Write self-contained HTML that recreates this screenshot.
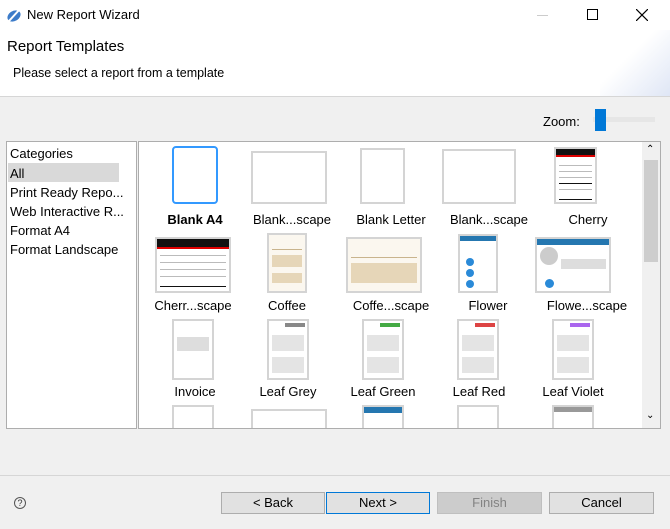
<!DOCTYPE html>
<html><head><meta charset="utf-8"><style>
*{margin:0;padding:0;box-sizing:border-box}
body{width:670px;height:529px;background:#f0f0f0;font-family:"Liberation Sans",sans-serif;position:relative;overflow:hidden;color:#000}
.a{position:absolute}
.t{position:absolute;font-size:13px;white-space:nowrap}
.lbl{position:absolute;font-size:13px;width:110px;text-align:center;white-space:nowrap}
.th{position:absolute;background:#fff;border:2px solid #d4d4d4;overflow:hidden}
.bar{position:absolute;left:3px;right:3px;height:1px;background:#bbb}
.btn{position:absolute;top:492px;height:22px;background:#e1e1e1;border:1px solid #adadad;font-size:13px;text-align:center;line-height:20px}
</style></head><body>
<div class="a" style="left:0;top:0;width:670px;height:97px;background:#fff;border-bottom:1px solid #d6d6d6"></div>
<div class="a" style="left:600px;top:30px;width:70px;height:66px;background:linear-gradient(135deg,#fff 40%,#dfe6f5)"></div>
<svg class="a" style="left:6px;top:7px" width="16" height="16" viewBox="0 0 16 16"><ellipse cx="8" cy="9" rx="7" ry="5" fill="#3d7cc9" transform="rotate(-30 8 9)"/><path d="M3 14 L14 2" stroke="#fff" stroke-width="2"/></svg>
<div class="t" style="left:27px;top:7px;font-size:13px">New Report Wizard</div>
<div class="a" style="left:537px;top:15px;width:11px;height:1px;background:#ccc"></div>
<div class="a" style="left:587px;top:9px;width:11px;height:11px;border:1px solid #000"></div>
<svg class="a" style="left:636px;top:9px" width="12" height="12"><path d="M0 0L12 12M12 0L0 12" stroke="#000" stroke-width="1.2"/></svg>
<div class="t" style="left:7px;top:38px;font-size:15px">Report Templates</div>
<div class="t" style="left:13px;top:66px;font-size:12.5px">Please select a report from a template</div>
<div class="t" style="left:543px;top:114px">Zoom:</div>
<div class="a" style="left:593px;top:117px;width:62px;height:5px;background:#e6e6e6"></div>
<div class="a" style="left:595px;top:109px;width:11px;height:22px;background:#0078d7"></div>
<div class="a" style="left:6px;top:141px;width:131px;height:288px;background:#fff;border:1px solid #adadad"></div>
<div class="a" style="left:8px;top:163px;width:111px;height:19px;background:#d9d9d9"></div>
<div class="t" style="left:10px;top:146px">Categories</div>
<div class="t" style="left:10px;top:166px">All</div>
<div class="t" style="left:10px;top:185px">Print Ready Repo...</div>
<div class="t" style="left:10px;top:204px">Web Interactive R...</div>
<div class="t" style="left:10px;top:223px">Format A4</div>
<div class="t" style="left:10px;top:242px">Format Landscape</div>
<div class="a" style="left:138px;top:141px;width:523px;height:288px;background:#fff;border:1px solid #adadad"></div>
<div class="a" style="left:642px;top:142px;width:18px;height:286px;background:#f0f0f0"></div>
<div class="a" style="left:644px;top:160px;width:14px;height:102px;background:#cdcdcd"></div>
<div class="t" style="left:646px;top:144px;font-size:10px">&#8963;</div>
<div class="t" style="left:646px;top:410px;font-size:10px">&#8964;</div>
<div class="a" style="left:138px;top:142px;width:504px;height:286px;overflow:hidden">
<div style="position:relative;left:-138px;top:-142px">
<div class="th" style="left:172px;top:146px;width:46px;height:58px;border-color:#3399ff;border-radius:4px"></div>
<div class="th" style="left:251px;top:151px;width:76px;height:53px"></div>
<div class="th" style="left:360px;top:148px;width:45px;height:56px"></div>
<div class="th" style="left:442px;top:149px;width:74px;height:55px"></div>
<div class="th" style="left:554px;top:147px;width:43px;height:57px"><div style="height:6px;background:#111"></div><div style="height:2px;background:#d00"></div><div class="bar" style="top:16px"></div><div class="bar" style="top:22px"></div><div class="bar" style="top:28px"></div><div class="bar" style="top:34px;background:#111"></div><div class="bar" style="top:40px"></div><div class="bar" style="top:50px;background:#111"></div></div>
<div class="lbl" style="left:140px;top:212px;font-weight:bold">Blank A4</div>
<div class="lbl" style="left:237px;top:212px">Blank...scape</div>
<div class="lbl" style="left:336px;top:212px">Blank Letter</div>
<div class="lbl" style="left:434px;top:212px">Blank...scape</div>
<div class="lbl" style="left:533px;top:212px">Cherry</div>
<div class="th" style="left:155px;top:237px;width:76px;height:56px"><div style="height:8px;background:#111"></div><div style="height:2px;background:#d00"></div><div class="bar" style="top:16px"></div><div class="bar" style="top:23px"></div><div class="bar" style="top:30px"></div><div class="bar" style="top:37px"></div><div class="bar" style="top:47px;background:#111"></div></div>
<div class="th" style="left:267px;top:233px;width:40px;height:60px;background:#fbf7ef"><div class="bar" style="top:14px;background:#c9b48d"></div><div class="bar" style="top:20px;background:#e6d6b8;height:12px"></div><div class="bar" style="top:38px;background:#e6d6b8;height:10px"></div></div>
<div class="th" style="left:346px;top:237px;width:76px;height:56px;background:#fbf7ef"><div class="bar" style="top:18px;background:#c9b48d"></div><div class="bar" style="top:24px;background:#e6d6b8;height:20px"></div></div>
<div class="th" style="left:458px;top:234px;width:40px;height:59px"><div style="height:5px;background:#2577b0"></div><div class="a" style="left:6px;top:22px;width:8px;height:8px;border-radius:50%;background:#2a8ad8"></div><div class="a" style="left:6px;top:33px;width:8px;height:8px;border-radius:50%;background:#2a8ad8"></div><div class="a" style="left:6px;top:44px;width:8px;height:8px;border-radius:50%;background:#2a8ad8"></div></div>
<div class="th" style="left:535px;top:237px;width:76px;height:56px"><div style="height:6px;background:#2577b0"></div><div class="a" style="left:3px;top:8px;width:18px;height:18px;border-radius:50%;background:#ccc"></div><div class="a" style="left:8px;top:40px;width:9px;height:9px;border-radius:50%;background:#2a8ad8"></div><div class="bar" style="top:20px;left:24px;height:10px;background:#ddd"></div></div>
<div class="lbl" style="left:138px;top:298px">Cherr...scape</div>
<div class="lbl" style="left:232px;top:298px">Coffee</div>
<div class="lbl" style="left:336px;top:298px">Coffe...scape</div>
<div class="lbl" style="left:433px;top:298px">Flower</div>
<div class="lbl" style="left:532px;top:298px">Flowe...scape</div>
<div class="th" style="left:172px;top:319px;width:42px;height:61px"><div class="bar" style="top:16px;height:14px;background:#ddd"></div></div>
<div class="th" style="left:267px;top:319px;width:42px;height:61px"><div class="a" style="right:2px;top:2px;width:20px;height:4px;background:#888"></div><div class="bar" style="top:14px;height:16px;background:#e4e4e4"></div><div class="bar" style="top:36px;height:16px;background:#e4e4e4"></div></div>
<div class="th" style="left:362px;top:319px;width:42px;height:61px"><div class="a" style="right:2px;top:2px;width:20px;height:4px;background:#4a4"></div><div class="bar" style="top:14px;height:16px;background:#e4e4e4"></div><div class="bar" style="top:36px;height:16px;background:#e4e4e4"></div></div>
<div class="th" style="left:457px;top:319px;width:42px;height:61px"><div class="a" style="right:2px;top:2px;width:20px;height:4px;background:#d44"></div><div class="bar" style="top:14px;height:16px;background:#e4e4e4"></div><div class="bar" style="top:36px;height:16px;background:#e4e4e4"></div></div>
<div class="th" style="left:552px;top:319px;width:42px;height:61px"><div class="a" style="right:2px;top:2px;width:20px;height:4px;background:#a6e"></div><div class="bar" style="top:14px;height:16px;background:#e4e4e4"></div><div class="bar" style="top:36px;height:16px;background:#e4e4e4"></div></div>
<div class="lbl" style="left:140px;top:384px">Invoice</div>
<div class="lbl" style="left:233px;top:384px">Leaf Grey</div>
<div class="lbl" style="left:328px;top:384px">Leaf Green</div>
<div class="lbl" style="left:424px;top:384px">Leaf Red</div>
<div class="lbl" style="left:518px;top:384px">Leaf Violet</div>
<div class="th" style="left:172px;top:405px;width:42px;height:40px"></div>
<div class="th" style="left:251px;top:409px;width:76px;height:40px"></div>
<div class="th" style="left:362px;top:405px;width:42px;height:40px"><div style="height:6px;background:#2577b0"></div></div>
<div class="th" style="left:457px;top:405px;width:42px;height:40px"></div>
<div class="th" style="left:552px;top:405px;width:42px;height:40px"><div style="height:5px;background:#999"></div></div>
</div></div>
<div class="a" style="left:0;top:475px;width:670px;height:1px;background:#d6d6d6"></div>
<div class="a" style="left:14px;top:497px;width:12px;height:12px;border:1px solid #555;border-radius:50%;font-size:9px;text-align:center;line-height:10px;color:#333">?</div>
<div class="btn" style="left:221px;width:104px">&lt; Back</div>
<div class="btn" style="left:326px;width:104px;border:1px solid #0078d7">Next &gt;</div>
<div class="btn" style="left:437px;width:105px;background:#cccccc;border-color:#bfbfbf;color:#838383">Finish</div>
<div class="btn" style="left:549px;width:105px">Cancel</div>
</body></html>
